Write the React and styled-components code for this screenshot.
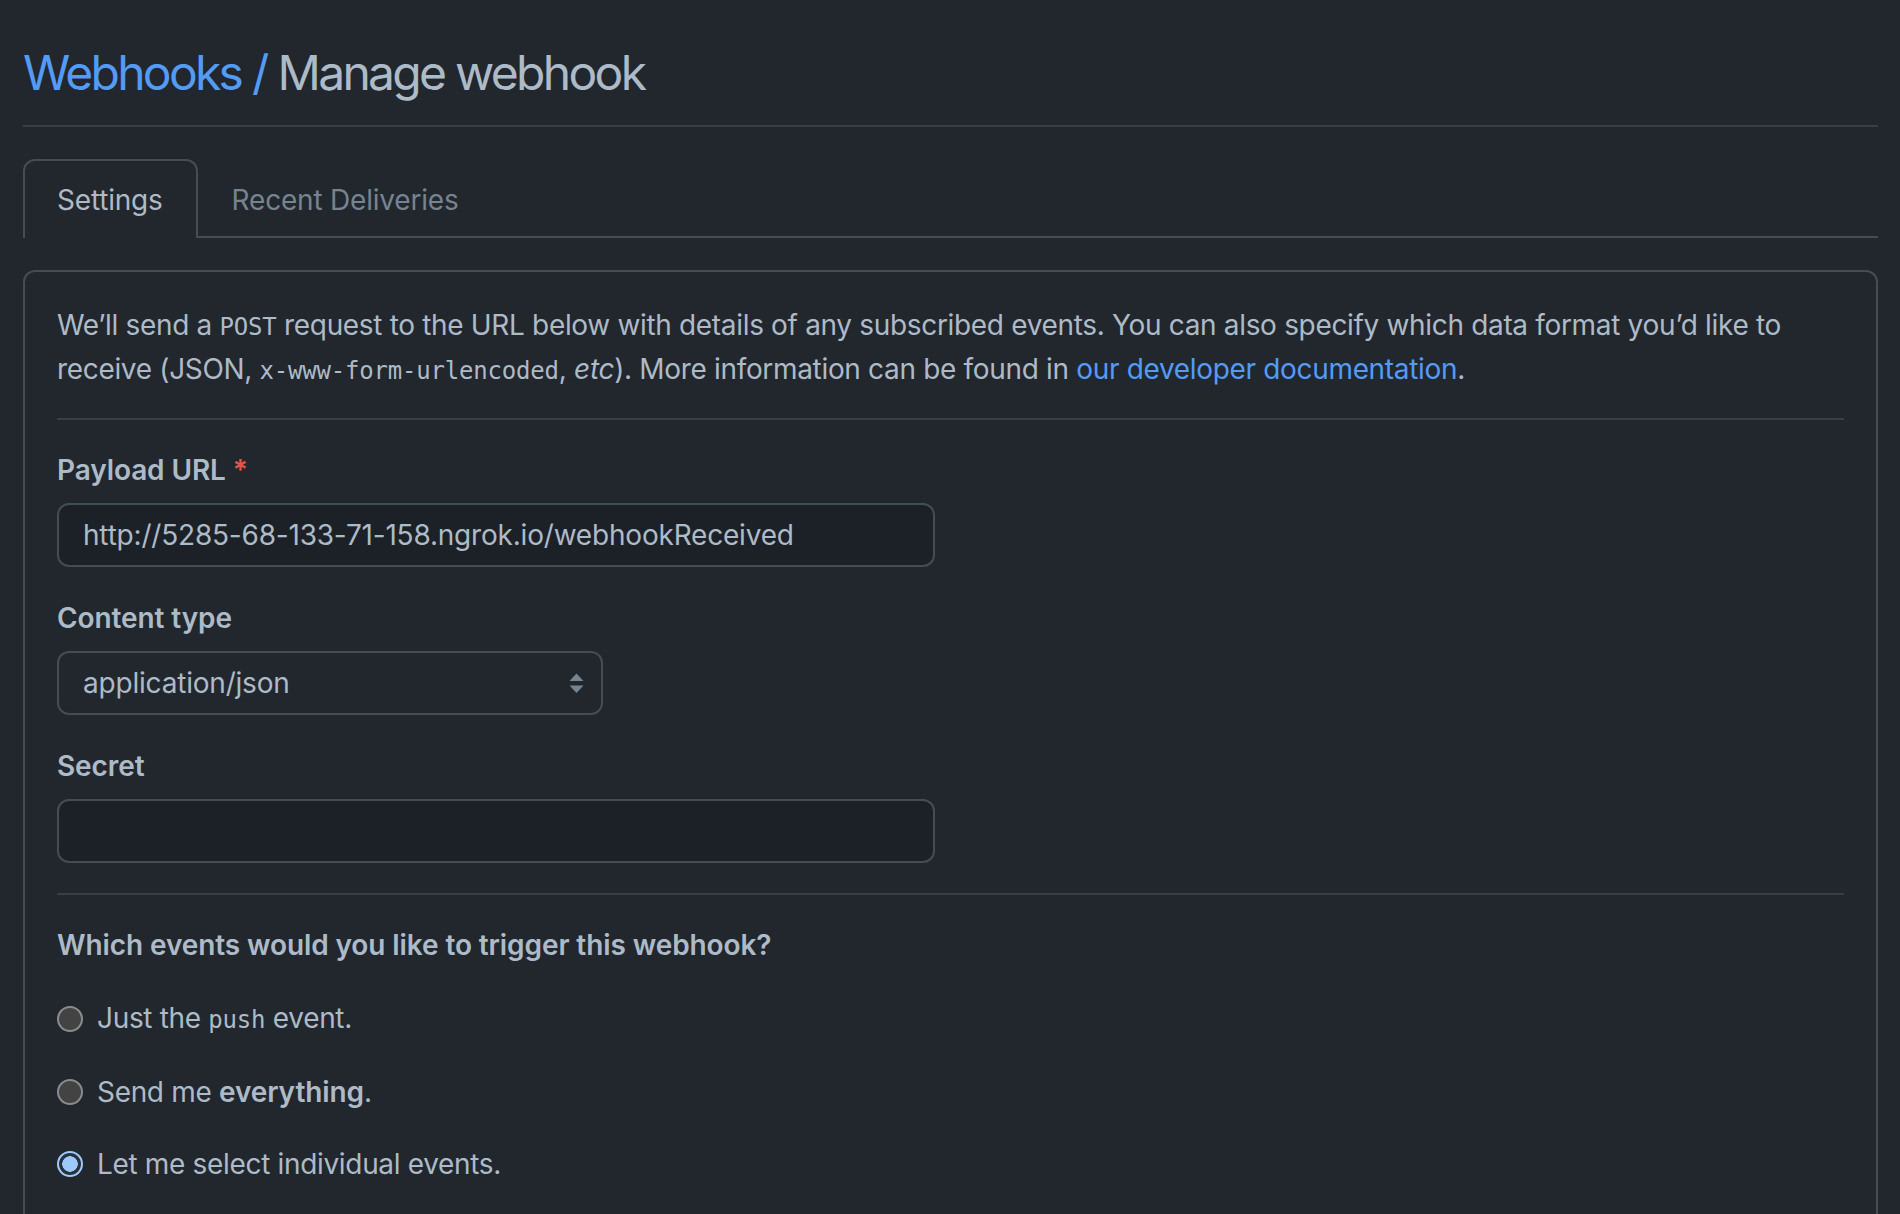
import React from 'react';
import styled, { createGlobalStyle } from 'styled-components';

const Global = createGlobalStyle`
  html, body {
    margin: 0;
    background: #22272e;
  }
  body {
    font-family: Inter, "Noto Sans", sans-serif;
    color: #adbac7;
    letter-spacing: -0.33px;
  }
`

const Page = styled.div`
  padding: 37px 22px 0 23px;
`
const Subhead = styled.div`
  padding-bottom: 16px;
  border-bottom: 2px solid #373e47;
  margin-bottom: 32px;
`
const Heading = styled.h2`
  margin: 0;
  font-size: 48px;
  line-height: 72px;
  font-weight: 400;
  letter-spacing: -2.7px;
  color: #adbac7;
  a {
    color: #539bf5;
    text-decoration: none;
  }
`
const TabNav = styled.nav`
  display: flex;
  border-bottom: 2px solid #444c56;
  margin-bottom: 32px;
`
const Tab = styled.span`
  box-sizing: border-box;
  height: 79px;
  padding: 0 33px 0 32px;
  display: flex;
  align-items: center;
  font-size: 28px;
  letter-spacing: -0.2px;
  color: ${({ active }) => (active ? '#adbac7' : '#768390')};
  border: 2px solid ${({ active }) => (active ? '#444c56' : 'transparent')};
  border-bottom: none;
  border-radius: 12px 12px 0 0;
  background: ${({ active }) => (active ? '#22272e' : 'transparent')};
  margin-bottom: -2px;
`
const Box = styled.div`
  border: 2px solid #444c56;
  border-radius: 12px;
  padding: 32px 32px 40px;
  min-height: 960px;
`
const Intro = styled.p`
  margin: 0 0 26px;
  font-size: 28px;
  line-height: 42px;
  a {
    color: #539bf5;
    text-decoration: none;
  }
`
const Code = styled.code`
  font-family: "DejaVu Sans Mono", "Liberation Mono", monospace;
  font-size: 24px;
  letter-spacing: -0.2px;
`
const Rule = styled.hr`
  border: 0;
  height: 2px;
  background: #373e47;
  margin: 0 0 29px;
`
const Group = styled.div`
  margin-bottom: 30px;
`
const Label = styled.label`
  display: block;
  font-size: 28px;
  line-height: 42px;
  font-weight: 600;
  letter-spacing: -0.1px;
  margin-bottom: 12px;
  span {
    color: #e5534b;
  }
`
const Input = styled.input`
  box-sizing: border-box;
  display: block;
  width: ${({ w }) => w}px;
  height: 64px;
  padding: 0 24px;
  font-family: inherit;
  font-size: 28px;
  letter-spacing: -0.2px;
  color: #adbac7;
  background: #1c2128;
  border: 2px solid #444c56;
  border-radius: 12px;
  outline: none;
`
const SelectBox = styled.div`
  box-sizing: border-box;
  width: 546px;
  height: 64px;
  padding: 0 17px 0 24px;
  display: flex;
  align-items: center;
  justify-content: space-between;
  font-size: 28px;
  letter-spacing: -0.2px;
  border: 2px solid #444c56;
  border-radius: 12px;
  background: #22272e;
`
const Question = styled.h3`
  margin: 0 0 31px;
  font-size: 28px;
  line-height: 42px;
  font-weight: 600;
  letter-spacing: -0.1px;
`
const RadioList = styled.div`
  display: flex;
  flex-direction: column;
  gap: 30px;
`
const RadioRow = styled.label`
  display: flex;
  align-items: center;
  gap: 14px;
  font-size: 28px;
  line-height: 42px;
  b {
    font-weight: 600;
    letter-spacing: -0.1px;
  }
`
const Radio = styled.span`
  box-sizing: border-box;
  width: 26px;
  height: 26px;
  border-radius: 50%;
  flex-shrink: 0;
  border: 2px solid ${({ checked }) => (checked ? '#9ccaff' : '#8b8b8b')};
  background: ${({ checked }) => (checked ? 'radial-gradient(circle, #9ccaff 0 7.5px, #2b3139 8px)' : '#434343')};
`

function Chevrons() {
  return (
    <svg width="15" height="21" viewBox="0 0 15 21">
      <path d="M7.5 0.5 L14.5 8 L0.5 8 Z" fill="#768390" />
      <path d="M0.5 12.5 L14.5 12.5 L7.5 20 Z" fill="#768390" />
    </svg>
  )
}

export default function App() {
  return (
    <Page>
      <Global />
      <Subhead>
        <Heading><a href="#">Webhooks /</a> Manage webhook</Heading>
      </Subhead>
      <TabNav>
        <Tab active>Settings</Tab>
        <Tab>Recent Deliveries</Tab>
      </TabNav>
      <Box>
        <Intro>
          We’ll send a <Code>POST</Code> request to the URL below with details of any subscribed events. You can also specify which data format you’d like to receive (JSON, <Code>x-www-form-urlencoded</Code>, <em>etc</em>). More information can be found in <a href="#">our developer documentation</a>.
        </Intro>
        <Rule />
        <Group>
          <Label>Payload URL <span>*</span></Label>
          <Input w={878} defaultValue="http://5285-68-133-71-158.ngrok.io/webhookReceived" />
        </Group>
        <Group>
          <Label>Content type</Label>
          <SelectBox>
            application/json
            <Chevrons />
          </SelectBox>
        </Group>
        <Group>
          <Label>Secret</Label>
          <Input w={878} />
        </Group>
        <Rule />
        <Question>Which events would you like to trigger this webhook?</Question>
        <RadioList>
          <RadioRow><Radio /><span>Just the <Code>push</Code> event.</span></RadioRow>
          <RadioRow><Radio /><span>Send me <b>everything</b>.</span></RadioRow>
          <RadioRow><Radio checked /><span>Let me select individual events.</span></RadioRow>
        </RadioList>
      </Box>
    </Page>
  )
}
